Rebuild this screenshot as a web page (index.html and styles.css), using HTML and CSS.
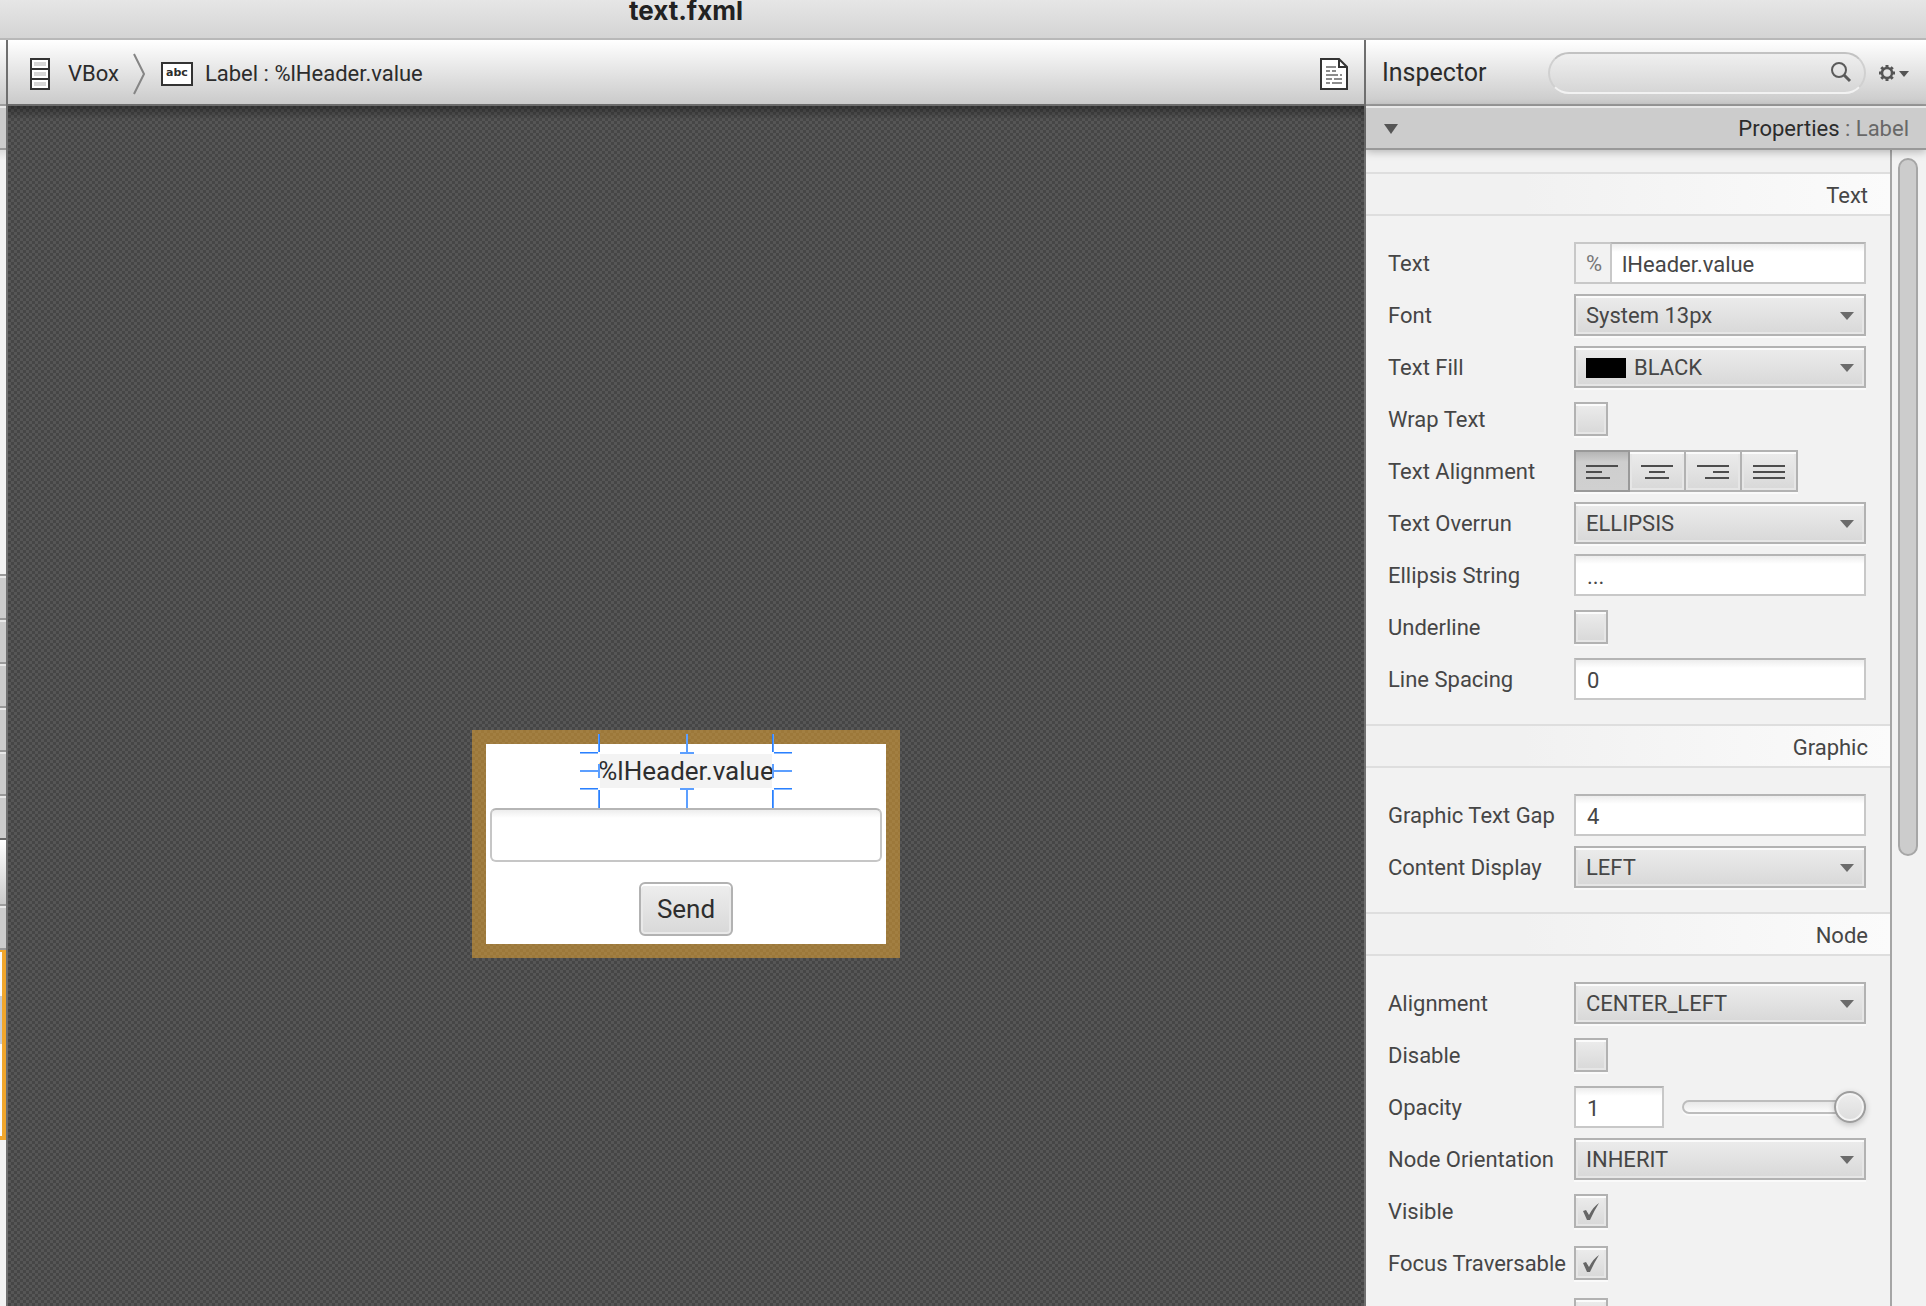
FILE: index.html
```html
<!DOCTYPE html>
<html lang="en">
<head>
<meta charset="utf-8">
<meta name="viewport" content="width=device-width, initial-scale=1">
<title>text.fxml</title>
<link rel="stylesheet" href="styles.css">
</head>
<body>
<header class="titlebar"><h1 class="window-title">text.fxml</h1></header>
<div class="workspace">
  <aside class="library" aria-label="Library">
    <div class="bar"></div>
    <div class="section-bar"></div>
    <div class="library-list"></div>
    <div class="section-bar"></div>
    <div class="section-bar"></div>
    <div class="section-bar"></div>
    <div class="section-bar"></div>
    <div class="section-bar"></div>
    <div class="section-bar section-last"></div>
    <div class="bar"></div>
    <div class="section-bar"></div>
    <div class="tree-focus"><div class="tree-row"></div></div>
  </aside>

  <main class="editor">
    <nav class="bar crumbs" aria-label="Selection path">
      <a class="crumb" href="#vbox">
        <svg class="icon" width="20" height="32" viewBox="0 0 20 32" aria-hidden="true">
          <rect x="1" y="1" width="18" height="30" fill="#fff" stroke="#333" stroke-width="2"/>
          <path d="M1 11h18M1 21h18" stroke="#333" stroke-width="2"/>
          <path d="M4 6h12M4 16h12M4 26h12" stroke="#d6d6d6" stroke-width="4"/>
        </svg>
        <span>VBox</span>
      </a>
      <svg class="chevron" width="12" height="42" viewBox="0 0 12 42" aria-hidden="true"><path d="M1 1l10 20L1 41" fill="none" stroke="#858585" stroke-width="2"/></svg>
      <a class="crumb" href="#label">
        <span class="abc">abc</span>
        <span>Label : %lHeader.value</span>
      </a>
      <button class="doc" type="button" aria-label="Document">
        <svg width="28" height="32" viewBox="0 0 28 32" aria-hidden="true">
          <path d="M1 1h18l8 8v22H1z" fill="#fff" stroke="#333" stroke-width="2"/>
          <path d="M19 1v8h8" fill="none" stroke="#333" stroke-width="2"/>
          <path d="M6 9h10M6 13h4m2 0h4M6 17h12m2 0h2M6 21h6m2 0h8M6 25h4m2 0h10" stroke="#8c8c8c" stroke-width="2"/>
        </svg>
      </button>
    </nav>
    <div class="canvas">
      <div class="stage">
        <form class="form">
          <div class="selected">
            <span class="form-label">%lHeader.value</span>
            <svg class="guides" width="212" height="74" viewBox="0 0 212 74" aria-hidden="true">
              <path d="M18 19H0M194 19h18M18 55H0M194 55h18" stroke="#8dbcff" stroke-width="2"/>
              <path d="M18 18.500H0M194 18.500h18M18 54.500H0M194 54.500h18" stroke="#2a80ff" stroke-width="1"/>
              <path d="M19 0v18M193 0v18M19 56v18M193 56v18" stroke="#5c9fff" stroke-width="2"/>
              <path d="M19.500 0v18M192.500 0v18M19.500 56v18M192.500 56v18" stroke="#2a80ff" stroke-width="1"/>
              <path d="M107 0v20M100 19h14M107 54v20M100 55h14M0 37h20M19 30v14M192 37h20M193 30v14" stroke="#5c9fff" stroke-width="2"/>
            </svg>
          </div>
          <input class="form-input" type="text" aria-label="Value">
          <button class="form-send" type="button">Send</button>
        </form>
      </div>
    </div>
  </main>

  <aside class="inspector" aria-label="Inspector">
    <div class="bar inspector-bar">
      <h2 class="inspector-title">Inspector</h2>
      <div class="search">
        <input class="search-input" type="search" aria-label="Search">
        <svg class="search-icon" width="22" height="22" viewBox="0 0 22 22" aria-hidden="true"><circle cx="9" cy="9" r="7" fill="none" stroke="#5a5a5a" stroke-width="2"/><path d="M14 14l6 6" stroke="#5a5a5a" stroke-width="3"/></svg>
      </div>
      <button class="gear" type="button" aria-label="Options">
        <svg width="32" height="18" viewBox="0 0 32 18" aria-hidden="true">
          <circle cx="9" cy="9" r="5" fill="none" stroke="#555" stroke-width="2.500"/>
          <path d="M9 1v3M9 14v3M1 9h3M14 9h3M3.300 3.300l2 2M12.700 12.700l2 2M14.700 3.300l-2 2M5.300 12.700l-2 2" stroke="#555" stroke-width="3"/>
          <path d="M21 7h10l-5 6z" fill="#555"/>
        </svg>
      </button>
    </div>
    <button class="section-bar properties" type="button">
      <svg width="14" height="10" viewBox="0 0 14 10" aria-hidden="true"><path d="M0 0h14L7 10z" fill="#555"/></svg>
      <span>Properties <span class="muted">: Label</span></span>
    </button>
    <div class="scroller">
      <div class="props">
        <h3 class="group">Text</h3>
        <div class="rows">
          <div class="row"><label for="text">Text</label>
            <div class="i18n"><button class="percent" type="button">%</button><input class="field" id="text" type="text" value="lHeader.value"></div></div>
          <div class="row"><label for="font">Font</label>
            <div class="drop"><select id="font"><option>System 13px</option></select></div></div>
          <div class="row"><label for="fill">Text Fill</label>
            <div class="drop swatch"><select id="fill"><option>BLACK</option></select></div></div>
          <div class="row"><label for="wrap">Wrap Text</label><input class="check" id="wrap" type="checkbox"></div>
          <div class="row"><span class="caption">Text Alignment</span>
            <div class="toggles" role="group" aria-label="Text Alignment">
              <button class="toggle pressed" type="button" aria-label="Left"><svg width="32" height="18" viewBox="0 0 32 18"><path d="M0 3h32M0 9h16M0 15h24"/></svg></button>
              <button class="toggle" type="button" aria-label="Center"><svg width="32" height="18" viewBox="0 0 32 18"><path d="M0 3h32M8 9h16M4 15h24"/></svg></button>
              <button class="toggle" type="button" aria-label="Right"><svg width="32" height="18" viewBox="0 0 32 18"><path d="M0 3h32M16 9h16M8 15h24"/></svg></button>
              <button class="toggle" type="button" aria-label="Justify"><svg width="32" height="18" viewBox="0 0 32 18"><path d="M0 3h32M0 9h32M0 15h32"/></svg></button>
            </div></div>
          <div class="row"><label for="overrun">Text Overrun</label>
            <div class="drop"><select id="overrun"><option>ELLIPSIS</option></select></div></div>
          <div class="row"><label for="ellipsis">Ellipsis String</label><input class="field" id="ellipsis" type="text" value="..."></div>
          <div class="row"><label for="underline">Underline</label><input class="check" id="underline" type="checkbox"></div>
          <div class="row"><label for="spacing">Line Spacing</label><input class="field" id="spacing" type="text" value="0"></div>
        </div>
        <h3 class="group">Graphic</h3>
        <div class="rows">
          <div class="row"><label for="gap">Graphic Text Gap</label><input class="field" id="gap" type="text" value="4"></div>
          <div class="row"><label for="display">Content Display</label>
            <div class="drop"><select id="display"><option>LEFT</option></select></div></div>
        </div>
        <h3 class="group">Node</h3>
        <div class="rows">
          <div class="row"><label for="alignment">Alignment</label>
            <div class="drop"><select id="alignment"><option>CENTER_LEFT</option></select></div></div>
          <div class="row"><label for="disable">Disable</label><input class="check" id="disable" type="checkbox"></div>
          <div class="row"><label for="opacity">Opacity</label>
            <div class="opacity"><input class="field" id="opacity" type="text" value="1"><input class="slider" type="range" min="0" max="1" step="0.01" value="1" aria-label="Opacity"></div></div>
          <div class="row"><label for="orientation">Node Orientation</label>
            <div class="drop"><select id="orientation"><option>INHERIT</option></select></div></div>
          <div class="row"><label for="visible">Visible</label><input class="check" id="visible" type="checkbox" checked></div>
          <div class="row"><label for="focus">Focus Traversable</label><input class="check" id="focus" type="checkbox" checked></div>
          <div class="row"><span></span><input class="check" type="checkbox" aria-label="Cache Shape"></div>
        </div>
      </div>
      <div class="scrollbar"><div class="thumb"></div></div>
    </div>
  </aside>
</div>
</body>
</html>
```
FILE: styles.css
```css
* { box-sizing: border-box; }

body {
  margin: 0;
  height: 100vh;
  display: flex;
  flex-direction: column;
  overflow: hidden;
  background: #f2f2f2;
  color: #464646;
  font: 22px/26px Roboto, "Liberation Sans", sans-serif;
}

h1, h2, h3 { margin: 0; font-weight: 400; }
button, input, select { font: inherit; color: inherit; margin: 0; }
button { padding: 0; border: 0; background: none; }
a { color: inherit; text-decoration: none; }
svg { display: block; flex: none; }

.titlebar {
  flex: none;
  height: 40px;
  padding-right: 554px;
  background: linear-gradient(#e6e6e6, #d4d4d4);
  border-bottom: 2px solid #b8b8b8;
}
.window-title {
  color: #222;
  font-family: Inter, "Liberation Sans", sans-serif;
  font-size: 26px;
  line-height: 22px;
  font-weight: 700;
  text-align: center;
}

.workspace {
  flex: 1;
  min-height: 0;
  display: grid;
  grid-template-columns: 8px minmax(0, 1fr) 562px;
}

.bar {
  flex: none;
  height: 66px;
  background: linear-gradient(#fff, #cacaca);
  border-bottom: 2px solid #9c9c9c;
}
.section-bar {
  flex: none;
  height: 44px;
  background: #ccc;
  border-top: 2px solid #e8e8e8;
  border-bottom: 2px solid #999;
}

.library {
  display: flex;
  flex-direction: column;
  min-height: 0;
  overflow: hidden;
  border-right: 2px solid #6f6f6f;
}
.library-list {
  flex: none;
  height: 426px;
  border-bottom: 2px solid #999;
  background: linear-gradient(#dcdcdc, #f2f2f2 10px);
}
.section-last { border-bottom-color: #666; }
.tree-focus {
  flex: none;
  height: 190px;
  border: solid #f0a62c;
  border-width: 2px 4px 4px 0;
  padding-top: 44px;
  background: #fafafa;
}
.tree-row { height: 48px; background: #c6cbd4; }

.editor {
  display: flex;
  flex-direction: column;
  min-width: 0;
  min-height: 0;
}
.crumbs {
  display: flex;
  align-items: center;
  gap: 12px;
  padding: 4px 16px 0 22px;
  border-bottom-color: #6b6b6b;
  color: #2c2c2c;
}
.crumb { display: flex; align-items: center; gap: 12px; }
.icon { margin-right: 6px; }
.chevron { margin: 0 4px 0 2px; }
.abc {
  width: 32px;
  height: 24px;
  border: 2px solid #333;
  background: #fff;
  font: bold 11px/18px "DejaVu Sans", sans-serif;
  text-align: center;
}
.doc { margin-left: auto; }

.canvas {
  flex: 1;
  min-height: 0;
  padding-top: 624px;
  background:
    linear-gradient(rgba(0, 0, 0, .35), transparent 14px),
    repeating-conic-gradient(#464646 0 25%, #565656 0 50%) 0 0 / 6px 6px;
}
.stage {
  width: 428px;
  margin: 0 auto;
  padding: 14px;
  background: repeating-conic-gradient(#9c783a 0 25%, #a27f42 0 50%) 0 0 / 6px 6px;
}
.form {
  display: flex;
  flex-direction: column;
  align-items: center;
  gap: 20px;
  padding: 10px 4px 8px;
  background: #fff;
  color: #2e2e2e;
  font-size: 26px;
  line-height: 34px;
}
.selected { position: relative; width: 172px; height: 34px; background: #f3f3f3; }
.form-label { display: flex; justify-content: center; white-space: nowrap; }
.guides { position: absolute; left: -20px; top: -20px; }
.form-input {
  width: 100%;
  height: 54px;
  padding: 0 12px;
  border: 2px solid #c6c6c6;
  border-top-color: #b5b5b5;
  border-radius: 6px;
  background: linear-gradient(#ededed, #fff 8px);
}
.form-send {
  width: 94px;
  height: 54px;
  border: 2px solid #b2b2b2;
  border-radius: 6px;
  background: linear-gradient(#eee, #d8d8d8);
  box-shadow: inset 0 2px #fff, inset 0 0 0 2px #e9e9e9;
}

.inspector {
  display: flex;
  flex-direction: column;
  min-height: 0;
  border-left: 2px solid #6f6f6f;
}
.inspector-bar {
  display: flex;
  align-items: center;
  padding: 2px 16px 0 16px;
}
.inspector-title { flex: 1; color: #2c2c2c; font-size: 25px; }
.search { position: relative; width: 318px; margin-right: 12px; }
.search-input {
  display: block;
  width: 100%;
  height: 42px;
  padding: 0 44px 0 20px;
  appearance: none;
  border: 2px solid #d0d0d0;
  border-top-color: #c2c2c2;
  border-bottom-color: #f2f2f2;
  border-radius: 21px;
  background: linear-gradient(#efefef, #d6d6d6);
}
.search-icon { position: absolute; right: 14px; top: 9px; }

.properties {
  display: flex;
  align-items: center;
  justify-content: space-between;
  padding: 2px 17px 0 18px;
  color: #2c2c2c;
  position: relative;
  box-shadow: 0 2px 8px rgba(0, 0, 0, .25);
}
.muted { color: #686868; }

.scroller { flex: 1; min-height: 0; display: flex; overflow: hidden; }
.props {
  flex: 1;
  min-width: 0;
  padding-top: 22px;
  border-right: 2px solid #a6a6a6;
}
.scrollbar { width: 34px; padding: 8px 8px 0 6px; }
.thumb {
  height: 698px;
  border: 2px solid #a6a6a6;
  border-radius: 10px;
  background: #ccc;
}
.group {
  height: 44px;
  padding: 4px 22px 0 0;
  border: solid #dedede;
  border-width: 2px 0;
  background: linear-gradient(90deg, #f1f1f1 30%, #fbfbfb);
  font-size: 22px;
  line-height: 36px;
  text-align: right;
}
.rows {
  display: grid;
  gap: 10px;
  padding: 26px 24px 24px 22px;
}
.row {
  display: grid;
  grid-template-columns: 186px minmax(0, 1fr);
  align-items: center;
  height: 42px;
  white-space: nowrap;
}
label, .caption { padding-top: 2px; }

.field {
  width: 100%;
  height: 42px;
  padding: 2px 11px 0;
  border: 2px solid #c8c8c8;
  border-top-color: #b5b5b5;
  background: linear-gradient(#ededed, #fff 8px);
  outline: 0;
}
.i18n { display: flex; }
.percent {
  flex: none;
  width: 36px;
  padding: 2px 0 0 2px;
  border: 2px solid #c8c8c8;
  border-right: 0;
  color: #777;
}
.i18n .field { padding-left: 10px; }

.drop { position: relative; }
.drop::after {
  content: "";
  position: absolute;
  right: 12px;
  top: 18px;
  width: 14px;
  height: 8px;
  background: #6b6b6b;
  clip-path: polygon(0 0, 100% 0, 50% 100%);
  pointer-events: none;
}
.drop select, .check, .toggle {
  border: 2px solid #b2b2b2;
  background: linear-gradient(#ececec, #d8d8d8);
  box-shadow: inset 0 2px #fbfbfb, inset 0 0 0 2px #e6e6e6, 0 2px #fafafa;
  appearance: none;
  border-radius: 0;
}
.drop select {
  display: block;
  width: 100%;
  height: 42px;
  padding: 2px 40px 0 10px;
}
.swatch::before {
  content: "";
  position: absolute;
  left: 12px;
  top: 12px;
  width: 40px;
  height: 20px;
  background: #000;
}
.swatch select { padding-left: 58px; }

.check { position: relative; width: 34px; height: 34px; }
.check:checked::before {
  content: "";
  position: absolute;
  left: 7px;
  top: 7px;
  width: 16px;
  height: 18px;
  background: #666;
  clip-path: path("M0 8 3 7 6 12 Q10 4 16 0 Q11 8 7 17 L4 17z");
}

.toggles { display: flex; }
.toggle {
  display: flex;
  align-items: center;
  justify-content: center;
  width: 56px;
  height: 42px;
  border-left-width: 0;
  padding-top: 2px;
}
.toggle.pressed {
  border-color: #999;
  border-left-width: 2px;
  background: linear-gradient(#b5b5b5, #cecece 10px, #d0d0d0);
  box-shadow: 0 2px #fafafa;
}
.toggle path { stroke: #4d4d4d; stroke-width: 2; }

.opacity { display: flex; align-items: center; gap: 18px; }
.opacity .field { flex: none; width: 90px; }
.slider {
  flex: 1;
  min-width: 0;
  height: 32px;
  appearance: none;
  background: none;
}
.slider::-webkit-slider-runnable-track {
  height: 14px;
  border-radius: 7px;
  background: linear-gradient(#e4e4e4, #fff);
  box-shadow: inset 0 0 0 2px #bdbdbd, 0 2px #fafafa;
}
.slider::-webkit-slider-thumb {
  appearance: none;
  width: 32px;
  height: 32px;
  margin-top: -9px;
  border: 2px solid #9d9d9d;
  border-radius: 50%;
  background: linear-gradient(#eee, #dcdcdc);
  box-shadow: inset 0 0 0 2px #f4f4f4, 0 2px 6px rgba(0, 0, 0, .2);
}
```
